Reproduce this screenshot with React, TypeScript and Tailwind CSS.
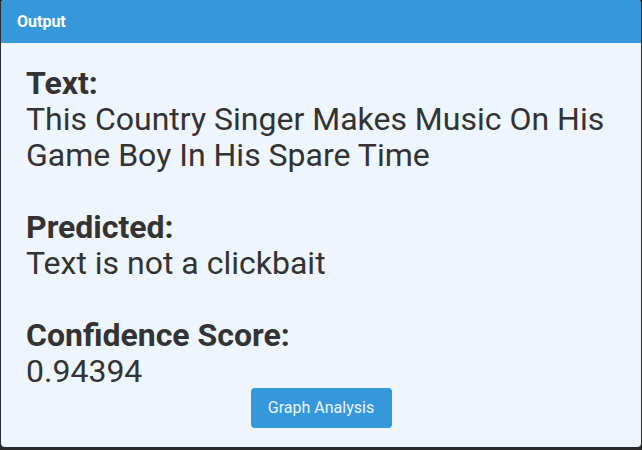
export default function App() {
  return (
    <div className="h-[450px] w-[642px] bg-[#2b2b2b] font-['Roboto','Liberation_Sans',sans-serif]">
      <div className="mx-[1px] flex h-[447px] flex-col overflow-hidden rounded-[4px] bg-[#eef5fc]">
        <div className="flex h-[43px] items-center bg-[#3498db] px-[16px] text-[16px] font-bold text-white">
          Output
        </div>
        <div className="flex flex-col px-[25px] pt-[22px] text-[32px] leading-[36px] text-[#333333]">
          <p className="font-bold">Text:</p>
          <p>This Country Singer Makes Music On His Game Boy In His Spare Time</p>
          <p className="mt-[36px] font-bold">Predicted:</p>
          <p>Text is not a clickbait</p>
          <p className="mt-[36px] font-bold">Confidence Score:</p>
          <p>0.94394</p>
          <div className="mt-[-1px] flex justify-center">
            <button className="h-[40px] w-[141px] rounded-[4px] bg-[#3498db] text-[16px] leading-none text-[#eef5fc]">
              Graph Analysis
            </button>
          </div>
        </div>
      </div>
    </div>
  )
}
